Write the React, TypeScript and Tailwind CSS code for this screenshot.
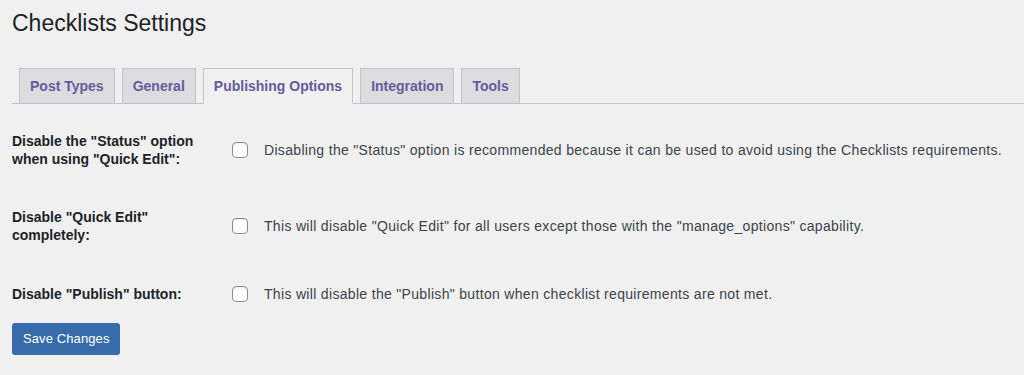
import { useState } from "react";

// tabs shown above the settings form
const tabs = ["Post Types", "General", "Publishing Options", "Integration", "Tools"];

// one row per option: label on the left, checkbox + description on the right
const options = [
  {
    id: "status",
    label: 'Disable the "Status" option when using "Quick Edit":',
    text: 'Disabling the "Status" option is recommended because it can be used to avoid using the Checklists requirements.',
  },
  {
    id: "quickedit",
    label: 'Disable "Quick Edit" completely:',
    text: 'This will disable "Quick Edit" for all users except those with the "manage_options" capability.',
  },
  {
    id: "publish",
    label: 'Disable "Publish" button:',
    text: 'This will disable the "Publish" button when checklist requirements are not met.',
  },
];

export default function App() {
  const [active, setActive] = useState("Publishing Options");
  const [checked, setChecked] = useState<Record<string, boolean>>({});

  return (
    <div className="min-h-screen bg-[#f0f0f1] pl-[12px] font-['Liberation_Sans',Arial,sans-serif] text-[14px] text-[#3c434a]">
      <h1 className="pt-[9px] pb-[4px] text-[23px] leading-[1.3] font-normal text-[#1d2327]">
        Checklists Settings
      </h1>

      {/* tab bar */}
      <nav className="mt-[25px] flex items-end border-b border-[#c3c4c7]">
        {tabs.map((tab) => (
          <button
            key={tab}
            onClick={() => setActive(tab)}
            className={
              tab === active
                ? "ml-[7px] -mb-px border border-[#c3c4c7] border-b-[#f0f0f1] bg-[#f0f0f1] px-[10px] py-[5px] text-[14px] leading-6 font-semibold text-[#665b9d]"
                : "ml-[7px] -mb-px border border-[#c3c4c7] bg-[#dcdcde] px-[10px] py-[5px] text-[14px] leading-6 font-semibold text-[#665b9d]"
            }
          >
            {tab}
          </button>
        ))}
      </nav>

      {/* form rows */}
      <div className="mt-[8px]">
        {options.map((opt) => (
          <div key={opt.id} className="flex items-center">
            <div className="w-[210px] shrink-0 py-5 pr-[10px] leading-[1.3] font-semibold text-[#1d2327]">
              {opt.label}
            </div>
            <label className="flex items-center gap-4 pl-[10px] leading-[1.3]">
              <input
                type="checkbox"
                checked={!!checked[opt.id]}
                onChange={(e) => setChecked({ ...checked, [opt.id]: e.target.checked })}
                className="h-4 w-4 shrink-0 appearance-none rounded-[4px] border border-[#8c8f94] bg-white shadow-[inset_0_1px_2px_rgba(0,0,0,0.1)] checked:bg-[#2271b1]"
              />
              <span className="tracking-[0.32px]">{opt.text}</span>
            </label>
          </div>
        ))}
      </div>

      <button className="mt-0 h-8 rounded-[3px] bg-[#376caa] px-[11px] text-[13px] tracking-[0.1px] text-white">
        Save Changes
      </button>
    </div>
  );
}
